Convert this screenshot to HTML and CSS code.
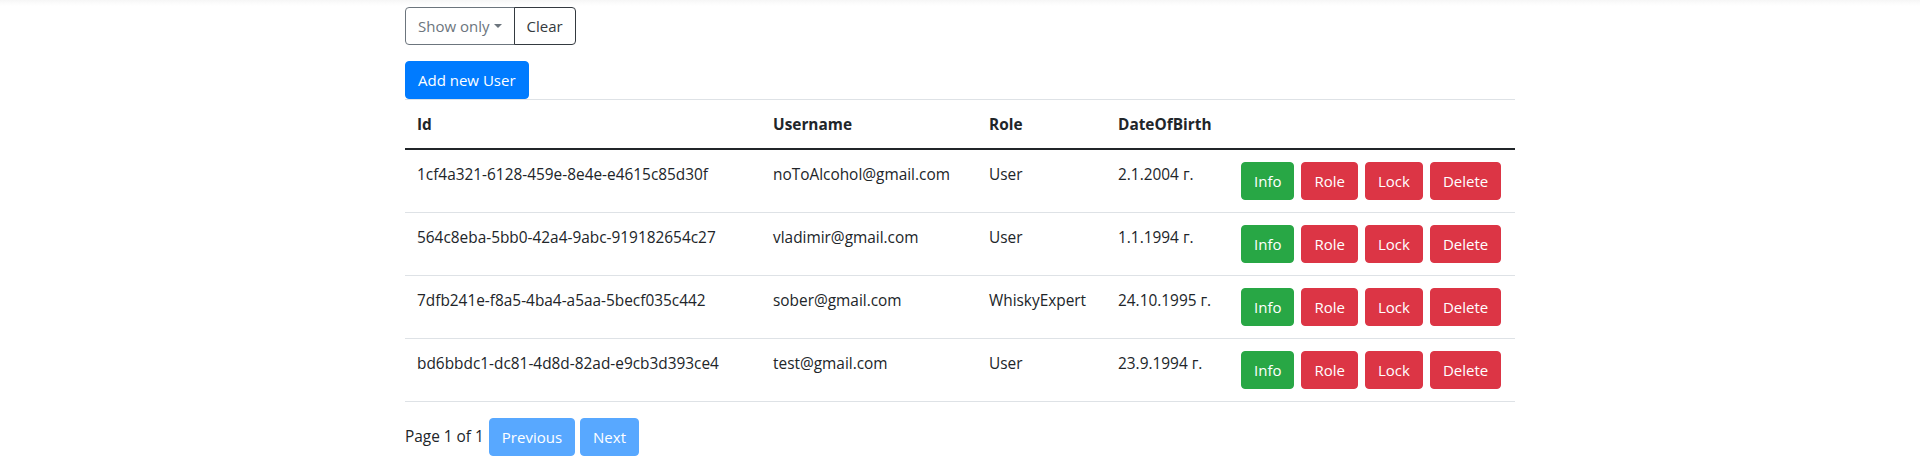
FILE: index.html
```html
<!DOCTYPE html>
<html lang="en">
<head>
<meta charset="utf-8">
<title>Users</title>
<link rel="stylesheet" href="styles.css">
</head>
<body>
<div class="container">
  <div class="btn-group">
    <button class="btn btn-outline-secondary dropdown-toggle">Show only</button>
    <button class="btn btn-outline-dark">Clear</button>
  </div>
  <div class="add-row">
    <button class="btn btn-primary">Add new User</button>
  </div>
  <table class="table">
    <thead>
      <tr>
        <th class="col-id">Id</th>
        <th class="col-user">Username</th>
        <th class="col-role">Role</th>
        <th class="col-dob">DateOfBirth</th>
        <th class="col-actions"></th>
      </tr>
    </thead>
    <tbody>
      <tr>
        <td>1cf4a321-6128-459e-8e4e-e4615c85d30f</td>
        <td>noToAlcohol@gmail.com</td>
        <td>User</td>
        <td>2.1.2004 г.</td>
        <td class="cell-actions"><div class="actions"><button class="btn btn-success">Info</button><button class="btn btn-danger">Role</button><button class="btn btn-danger">Lock</button><button class="btn btn-danger">Delete</button></div></td>
      </tr>
      <tr>
        <td>564c8eba-5bb0-42a4-9abc-919182654c27</td>
        <td>vladimir@gmail.com</td>
        <td>User</td>
        <td>1.1.1994 г.</td>
        <td class="cell-actions"><div class="actions"><button class="btn btn-success">Info</button><button class="btn btn-danger">Role</button><button class="btn btn-danger">Lock</button><button class="btn btn-danger">Delete</button></div></td>
      </tr>
      <tr>
        <td>7dfb241e-f8a5-4ba4-a5aa-5becf035c442</td>
        <td>sober@gmail.com</td>
        <td>WhiskyExpert</td>
        <td>24.10.1995 г.</td>
        <td class="cell-actions"><div class="actions"><button class="btn btn-success">Info</button><button class="btn btn-danger">Role</button><button class="btn btn-danger">Lock</button><button class="btn btn-danger">Delete</button></div></td>
      </tr>
      <tr>
        <td>bd6bbdc1-dc81-4d8d-82ad-e9cb3d393ce4</td>
        <td>test@gmail.com</td>
        <td>User</td>
        <td>23.9.1994 г.</td>
        <td class="cell-actions"><div class="actions"><button class="btn btn-success">Info</button><button class="btn btn-danger">Role</button><button class="btn btn-danger">Lock</button><button class="btn btn-danger">Delete</button></div></td>
      </tr>
    </tbody>
  </table>
  <div class="pager">
    <span class="pager-text">Page 1 of 1</span>
    <button class="btn btn-primary disabled">Previous</button>
    <button class="btn btn-primary disabled">Next</button>
  </div>
</div>
</body>
</html>
```

FILE: styles.css
```css
* { box-sizing: border-box; }

html, body {
  margin: 0;
  padding: 0;
}

body {
  font-family: "Open Sans", "Noto Sans", sans-serif;
  font-size: 15.4px;
  line-height: 24px;
  color: #212529;
  background: #fff linear-gradient(to bottom, #f6f6f6 0, #fbfbfb 3px, #fff 6px) no-repeat;
  background-size: 100% 6px;
}

.container {
  width: 1140px;
  margin: 0 auto;
  padding: 7px 15px 0;
}

.btn {
  display: inline-block;
  font-family: inherit;
  font-size: 15px;
  line-height: 24px;
  padding: 6px 12px;
  border: 1px solid transparent;
  border-radius: 4px;
  background: transparent;
  color: #212529;
  cursor: pointer;
  white-space: nowrap;
}

.btn-group {
  display: flex;
}

.btn-group .btn + .btn {
  margin-left: -1px;
}

.btn-group .btn:first-child {
  border-top-right-radius: 0;
  border-bottom-right-radius: 0;
}

.btn-group .btn:last-child {
  border-top-left-radius: 0;
  border-bottom-left-radius: 0;
  position: relative;
}

.btn-outline-secondary {
  color: #6c757d;
  border-color: #6c757d;
}

.btn-outline-dark {
  color: #343a40;
  border-color: #343a40;
}

.dropdown-toggle::after {
  content: "";
  display: inline-block;
  margin-left: 4px;
  vertical-align: 4px;
  border-top: 4.5px solid;
  border-right: 4.5px solid transparent;
  border-left: 4.5px solid transparent;
  border-bottom: 0;
}

.btn-primary {
  color: #fff;
  background-color: #007bff;
  border-color: #007bff;
}

.btn-success {
  color: #fff;
  background-color: #28a745;
  border-color: #28a745;
}

.btn-danger {
  color: #fff;
  background-color: #dc3545;
  border-color: #dc3545;
}

.btn.disabled {
  opacity: 0.65;
  cursor: default;
}

.add-row {
  margin-top: 16px;
  display: flex;
}

.table {
  width: 1110px;
  table-layout: fixed;
  border-collapse: collapse;
  margin-bottom: 16px;
  border-bottom: 1px solid #dee2e6;
}

.table th,
.table td {
  padding: 13px 12px 11px;
  text-align: left;
  vertical-align: top;
  border-top: 1px solid #dee2e6;
}

.table td.cell-actions {
  padding: 12px;
}

.table th {
  font-weight: 700;
  border-bottom: 2px solid #212529;
}

.col-id { width: 356px; }
.col-user { width: 216px; }
.col-role { width: 129px; }
.col-dob { width: 123px; }
.col-actions { width: 286px; }

.actions {
  display: flex;
  gap: 7px;
}

.pager {
  display: flex;
  align-items: center;
  gap: 5px;
}
```
